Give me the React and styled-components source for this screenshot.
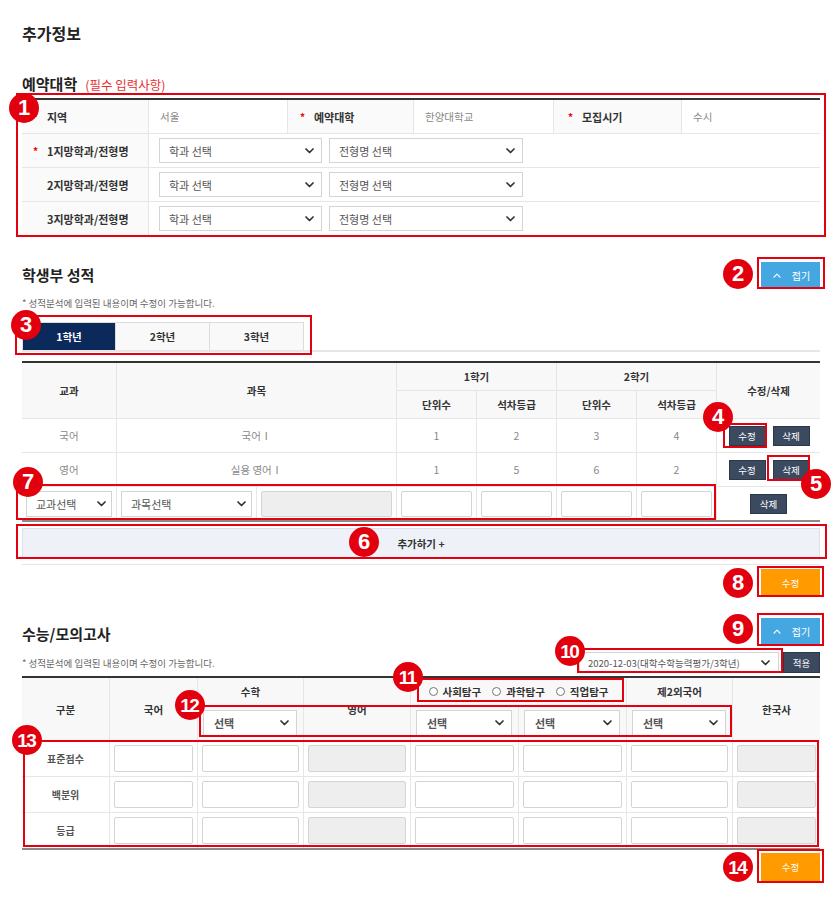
import React from 'react';
import styled, { createGlobalStyle } from 'styled-components';

const Global = createGlobalStyle`
  html, body { margin: 0; padding: 0; background: #fff; }
  body { font-family: "Noto Sans CJK KR", "Noto Sans", sans-serif; color: #333; }
  *, *::before, *::after { box-sizing: border-box; }
`;

const Page = styled.div`
  position: relative;
  width: 840px;
  padding: 23px 20px 20px 22px;
`;

const Title = styled.h1`
  margin: 0;
  font-size: 16px;
  line-height: 20px;
  font-weight: 700;
  color: #222;
`;

const SectionTitle = styled.h2`
  margin: ${p => p.$mt || 0}px 0 0;
  padding-top: ${p => p.$shift || 0}px;
  display: flex;
  align-items: baseline;
  gap: 8px;
  font-size: 15px;
  line-height: 20px;
  font-weight: 700;
  color: #222;
`;

const Required = styled.span`
  font-size: 12.5px;
  font-weight: 400;
  color: #e8312f;
`;

const HeadRow = styled.div`
  display: flex;
  justify-content: space-between;
  align-items: center;
  height: 26px;
  margin-top: ${p => p.$mt}px;
`;

const RightRow = styled.div`
  display: flex;
  justify-content: flex-end;
  margin-top: ${p => p.$mt}px;
`;

const Notice = styled.p`
  margin: ${p => p.$mt || 0}px 0 0;
  font-size: 9.5px;
  line-height: 14px;
  color: #666;
`;

const FoldButton = styled.button`
  width: 59px;
  height: 26px;
  border: 0;
  background: #45a7e1;
  color: #fff;
  font-family: inherit;
  font-size: 10px;
  display: flex;
  align-items: center;
  justify-content: center;
  gap: 11px;
  padding: 0 0 0 2px;
`;

const OrangeButton = styled.button`
  width: 59px;
  height: ${p => p.$h || 27}px;
  border: 0;
  background: #ff9a00;
  color: #fff;
  font-family: inherit;
  font-size: 9.5px;
  padding: 0;
`;

const DarkButton = styled.button`
  width: 37px;
  height: ${p => p.$h || 20}px;
  border: 1px solid #2c394b;
  background: #3b4a5f;
  color: #fff;
  font-family: inherit;
  font-size: 9.5px;
  padding: 0;
  flex-shrink: 0;
`;

/* ---------- form controls ---------- */
const SelectBox = styled.div`
  display: flex;
  align-items: center;
  justify-content: space-between;
  flex-shrink: 0;
  width: ${p => (p.$w ? `${p.$w}px` : '100%')};
  height: ${p => p.$h || 25}px;
  padding: 0 ${p => p.$pr ?? 7}px 0 ${p => p.$pl ?? 9}px;
  border: 1px solid #d4d4d4;
  background: #fff;
  font-size: ${p => p.$fs || 11}px;
  color: #555;
  white-space: nowrap;
`;

const TextBox = styled.div`
  width: 100%;
  height: ${p => p.$h || 26}px;
  border: 1px solid #d4d4d4;
  border-radius: 2px;
  background: ${p => (p.$disabled ? '#eeeeee' : '#fff')};
`;

const Chevron = ({ color = '#333' }) => (
  <svg width="9" height="6" viewBox="0 0 9 6" aria-hidden="true">
    <path d="M1 1l3.5 3.5L8 1" fill="none" stroke={color} strokeWidth="1.7" strokeLinecap="round" strokeLinejoin="round" />
  </svg>
);

const CaretUp = () => (
  <svg width="8" height="5" viewBox="0 0 8 5" aria-hidden="true">
    <path d="M1 4.2L4 1.2l3 3" fill="none" stroke="#fff" strokeWidth="1.2" strokeLinecap="round" strokeLinejoin="round" />
  </svg>
);

const Select = ({ children, ...rest }) => (
  <SelectBox {...rest}>
    <span>{children}</span>
    <Chevron />
  </SelectBox>
);

/* ---------- table 1 ---------- */
const InfoGrid = styled.div`
  display: grid;
  grid-template-columns: 127px 139px 126px 140px 128px 138px;
  grid-template-rows: 34px 34px 34px 33px;
  margin-top: 3px;
  border-top: 2px solid #333;
  border-bottom: 2px solid #666;
`;

const InfoCell = styled.div`
  display: flex;
  align-items: center;
  gap: ${p => p.$gap || 0}px;
  grid-column: ${p => (p.$span ? `span ${p.$span}` : 'auto')};
  padding-left: ${p => p.$pl ?? 11}px;
  background: ${p => (p.$label ? '#fafafa' : '#fff')};
  font-size: ${p => (p.$label ? 11 : 10.5)}px;
  font-weight: ${p => (p.$label ? 700 : 400)};
  color: ${p => (p.$label ? '#333' : '#888')};
  border-bottom: ${p => (p.$last ? '0' : '1px solid #e6e6e6')};
  border-right: ${p => (p.$end ? '0' : '1px solid #e6e6e6')};
  white-space: nowrap;
`;

const Star = styled.span`
  display: inline-block;
  width: 14px;
  color: #e00;
  font-size: 10px;
  font-weight: 700;
`;

/* ---------- tabs ---------- */
const TabBar = styled.div`
  display: flex;
  margin-top: 12px;
  border-bottom: 2px solid #e6e6e6;
`;

const Tab = styled.div`
  width: 94px;
  height: 28px;
  display: flex;
  align-items: center;
  justify-content: center;
  border: 1px solid #dcdcdc;
  border-left-width: ${p => (p.$first ? 1 : 0)}px;
  border-bottom: 0;
  background: ${p => (p.$active ? '#0b2a5b' : '#f9f9f9')};
  color: ${p => (p.$active ? '#fff' : '#333')};
  font-size: 10.5px;
  font-weight: 700;
`;

/* ---------- grids 2 & 3 ---------- */
const DataGrid = styled.div`
  display: grid;
  grid-template-columns: ${p => p.$cols};
  grid-template-rows: ${p => p.$rows};
  margin-top: ${p => p.$mt}px;
  border-top: 2px solid #333;
  border-bottom: 2px solid #8a8a8a;
`;

const Cell = styled.div`
  display: flex;
  align-items: center;
  justify-content: center;
  gap: ${p => p.$gap || 0}px;
  grid-column: ${p => (p.$cs ? `span ${p.$cs}` : 'auto')};
  grid-row: ${p => (p.$rs ? `span ${p.$rs}` : 'auto')};
  padding: 0 ${p => p.$px ?? 0}px 0 ${p => p.$pxl ?? p.$px ?? 0}px;
  background: ${p => (p.$head ? '#f8f8f8' : '#fff')};
  font-size: ${p => p.$fs || 10.5}px;
  font-weight: ${p => (p.$head || p.$bold ? 700 : 400)};
  color: ${p => (p.$head ? '#333' : p.$bold ? '#555' : '#888')};
  border-bottom: ${p => (p.$last ? '0' : '1px solid #e6e6e6')};
  border-right: ${p => (p.$end ? '0' : '1px solid #e6e6e6')};
  white-space: nowrap;
`;

const AddBar = styled.div`
  margin-top: 6px;
  height: 30px;
  display: flex;
  align-items: center;
  justify-content: center;
  border: 1px solid #dde1e8;
  background: #eef2f8;
  font-size: 10.5px;
  font-weight: 700;
  color: #333;
`;

const Divider = styled.div`
  margin-top: 6px;
  height: 1px;
  background: #e6e6e6;
`;

const FilterRow = styled.div`
  display: flex;
  justify-content: space-between;
  align-items: center;
  height: 21px;
  margin-top: 8px;
`;

const FilterGroup = styled.div`
  display: flex;
  align-items: center;
  gap: 4px;
`;

const RadioGroup = styled.div`
  display: flex;
  align-items: center;
  gap: 11px;
`;

const RadioItem = styled.span`
  display: inline-flex;
  align-items: center;
  gap: 5px;
`;

const RadioDot = styled.span`
  width: 9px;
  height: 9px;
  border-radius: 50%;
  border: 1px solid #777;
  background: #fff;
`;

/* ---------- annotations ---------- */
const MarkBox = styled.div`
  position: absolute;
  left: ${p => p.$x}px;
  top: ${p => p.$y}px;
  width: ${p => p.$w}px;
  height: ${p => p.$h}px;
  border: 2px solid #e5000f;
  pointer-events: none;
`;

const Badge = styled.div`
  position: absolute;
  left: ${p => p.$x - 15}px;
  top: ${p => p.$y - 15}px;
  width: 30px;
  height: 30px;
  border-radius: 50%;
  background: #e3000e;
  color: #fff;
  display: flex;
  align-items: center;
  justify-content: center;
  font-family: "Liberation Sans", Arial, sans-serif;
  font-weight: 700;
  font-size: ${p => (p.$wide ? 19 : 22)}px;
  letter-spacing: ${p => (p.$wide ? -1.5 : 0)}px;
  padding-right: ${p => (p.$wide ? 1.5 : 0)}px;
  line-height: 1;
`;

const boxes = [
  [16, 93, 810, 144],
  [757, 257, 68, 32],
  [15, 315, 297, 40],
  [723, 423, 44, 25],
  [767, 455, 43, 26],
  [16, 524, 811, 35],
  [16, 484, 700, 36],
  [757, 566, 67, 31],
  [757, 613, 67, 33],
  [577, 648, 206, 25],
  [417, 678, 207, 24],
  [199, 705, 533, 32],
  [23, 740, 796, 107],
  [757, 849, 67, 34],
];

const badges = [
  [1, 24, 108], [2, 738, 274], [3, 26, 325], [4, 718, 417], [5, 816, 484],
  [6, 364, 542], [7, 28, 482], [8, 738, 583], [9, 738, 629], [10, 570, 651],
  [11, 408, 677], [12, 190, 705], [13, 27, 740], [14, 738, 867],
];

const grades = [
  { subject: '국어', course: '국어Ⅰ', v: ['1', '2', '3', '4'] },
  { subject: '영어', course: '실용 영어Ⅰ', v: ['1', '5', '6', '2'] },
];

const examRows = ['표준점수', '백분위', '등급'];

export default function App() {
  return (
    <>
      <Global />
      <Page>
        <Title>추가정보</Title>

        <SectionTitle $mt={31}>
          예약대학 <Required>(필수 입력사항)</Required>
        </SectionTitle>
        <InfoGrid>
          <InfoCell $label><Star>*</Star>지역</InfoCell>
          <InfoCell>서울</InfoCell>
          <InfoCell $label $pl={12}><Star>*</Star>예약대학</InfoCell>
          <InfoCell>한양대학교</InfoCell>
          <InfoCell $label $pl={14}><Star>*</Star>모집시기</InfoCell>
          <InfoCell $end>수시</InfoCell>
          {[1, 2, 3].map(n => (
            <React.Fragment key={n}>
              <InfoCell $label $last={n === 3}>
                <Star>{n === 1 ? '*' : ''}</Star>
                {n}지망학과/전형명
              </InfoCell>
              <InfoCell $span={5} $end $last={n === 3} $pl={10} $gap={7}>
                <Select $w={163}>학과 선택</Select>
                <Select $w={194}>전형명 선택</Select>
              </InfoCell>
            </React.Fragment>
          ))}
        </InfoGrid>

        <HeadRow $mt={25}>
          <SectionTitle>학생부 성적</SectionTitle>
          <FoldButton><CaretUp />접기</FoldButton>
        </HeadRow>
        <Notice $mt={8}>* 성적분석에 입력된 내용이며 수정이 가능합니다.</Notice>

        <TabBar>
          <Tab $first $active>1학년</Tab>
          <Tab>2학년</Tab>
          <Tab>3학년</Tab>
        </TabBar>

        <DataGrid
          $mt={9}
          $cols="95px 140px 140px 80px 80px 80px 80px 103px"
          $rows="28px 28px 34px 34px 33px"
        >
          <Cell $head $rs={2}>교과</Cell>
          <Cell $head $rs={2} $cs={2}>과목</Cell>
          <Cell $head $cs={2}>1학기</Cell>
          <Cell $head $cs={2}>2학기</Cell>
          <Cell $head $rs={2} $end>수정/삭제</Cell>
          <Cell $head>단위수</Cell>
          <Cell $head>석차등급</Cell>
          <Cell $head>단위수</Cell>
          <Cell $head>석차등급</Cell>

          {grades.map(g => (
            <React.Fragment key={g.subject}>
              <Cell>{g.subject}</Cell>
              <Cell $cs={2}>{g.course}</Cell>
              {g.v.map((x, i) => <Cell key={i}>{x}</Cell>)}
              <Cell $end $gap={7} $pxl={1}>
                <DarkButton>수정</DarkButton>
                <DarkButton>삭제</DarkButton>
              </Cell>
            </React.Fragment>
          ))}

          <Cell $last $px={4}><Select $h={26} $pr={5}>교과선택</Select></Cell>
          <Cell $last $px={4}><Select $h={26} $pr={5}>과목선택</Select></Cell>
          <Cell $last $px={4}><TextBox $disabled /></Cell>
          <Cell $last $px={4}><TextBox /></Cell>
          <Cell $last $px={4}><TextBox /></Cell>
          <Cell $last $px={4}><TextBox /></Cell>
          <Cell $last $px={4}><TextBox /></Cell>
          <Cell $last $end><DarkButton>삭제</DarkButton></Cell>
        </DataGrid>

        <AddBar>추가하기 +</AddBar>
        <Divider />

        <RightRow $mt={4}>
          <OrangeButton>수정</OrangeButton>
        </RightRow>

        <HeadRow $mt={22}>
          <SectionTitle $shift={6}>수능/모의고사</SectionTitle>
          <FoldButton><CaretUp />접기</FoldButton>
        </HeadRow>

        <FilterRow>
          <Notice>* 성적분석에 입력된 내용이며 수정이 가능합니다.</Notice>
          <FilterGroup>
            <Select $w={200} $h={21} $fs={9.5} $pl={8} $pr={8}>2020-12-03(대학수학능력평가/3학년)</Select>
            <DarkButton $h={21}>적용</DarkButton>
          </FilterGroup>
        </FilterRow>

        <DataGrid
          $mt={3}
          $cols="88px 88px 106px 107px 108px 108px 106px 87px"
          $rows="28px 35px 36px 36px 35px"
        >
          <Cell $head $rs={2}>구분</Cell>
          <Cell $head $rs={2}>국어</Cell>
          <Cell $head>수학</Cell>
          <Cell $head $rs={2}>영어</Cell>
          <Cell $head $cs={2}>
            <RadioGroup>
              <RadioItem><RadioDot />사회탐구</RadioItem>
              <RadioItem><RadioDot />과학탐구</RadioItem>
              <RadioItem><RadioDot />직업탐구</RadioItem>
            </RadioGroup>
          </Cell>
          <Cell $head>제2외국어</Cell>
          <Cell $head $rs={2} $end>한국사</Cell>
          <Cell $head $px={6} $pxl={5}><Select $h={27} $pl={10}>선택</Select></Cell>
          <Cell $head $px={6} $pxl={5}><Select $h={27} $pl={10}>선택</Select></Cell>
          <Cell $head $px={6} $pxl={5}><Select $h={27} $pl={10}>선택</Select></Cell>
          <Cell $head $px={6} $pxl={5}><Select $h={27} $pl={10}>선택</Select></Cell>

          {examRows.map((r, ri) => {
            const last = ri === examRows.length - 1;
            return (
              <React.Fragment key={r}>
                <Cell $bold $fs={10} $last={last}>{r}</Cell>
                {[0, 1, 2, 3, 4, 5, 6].map(c => (
                  <Cell key={c} $px={4} $last={last} $end={c === 6}>
                    <TextBox $h={27} $disabled={c === 2 || c === 6} />
                  </Cell>
                ))}
              </React.Fragment>
            );
          })}
        </DataGrid>

        <RightRow $mt={3}>
          <OrangeButton $h={28}>수정</OrangeButton>
        </RightRow>

        {boxes.map(([x, y, w, h], i) => (
          <MarkBox key={`b${i}`} $x={x} $y={y} $w={w} $h={h} />
        ))}
        {badges.map(([n, x, y]) => (
          <Badge key={`n${n}`} $x={x} $y={y} $wide={n >= 10}>{n}</Badge>
        ))}
      </Page>
    </>
  );
}
